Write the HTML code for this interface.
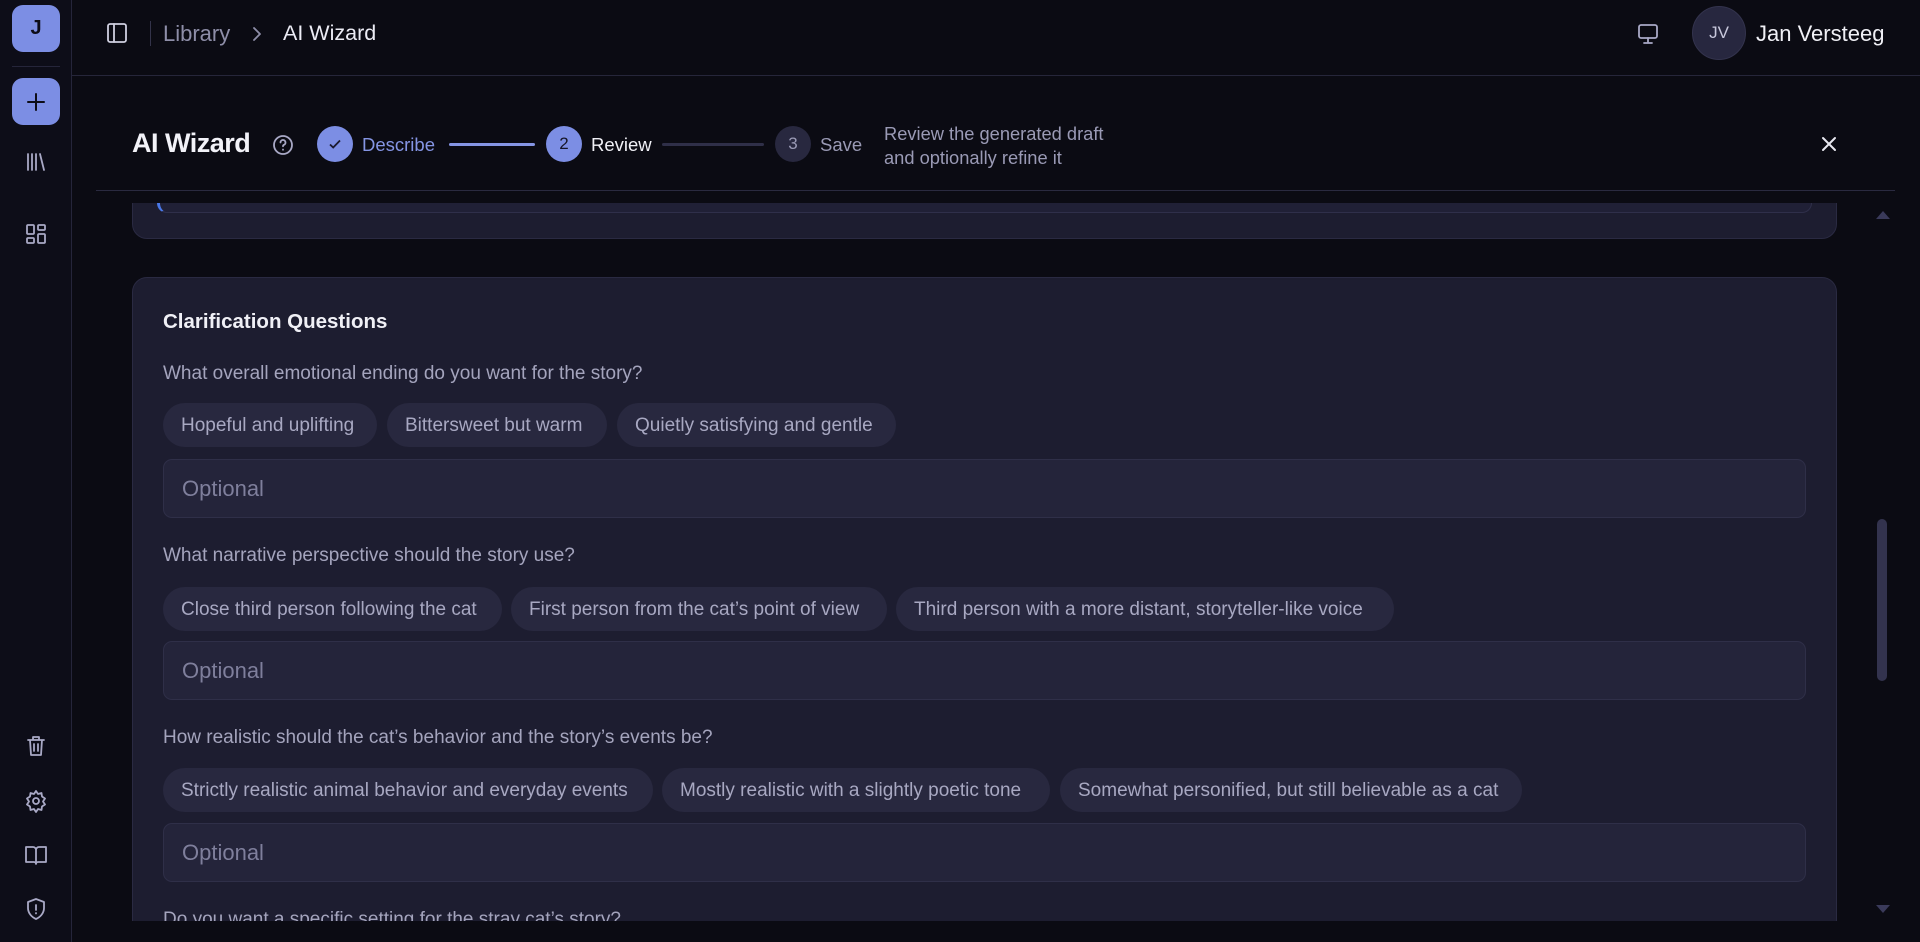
<!DOCTYPE html>
<html><head><meta charset="utf-8"><style>
*{box-sizing:border-box;margin:0;padding:0}
body{width:1920px;height:942px;background:#0b0b13;font-family:"Liberation Sans",sans-serif;color:#e6e6f0;position:relative;overflow:hidden}
.abs{position:absolute}
.side{left:0;top:0;width:72px;height:942px;background:#0d0d18;border-right:1px solid #25253a}
.btn{left:12px;width:48px;height:47px;border-radius:11px;background:#7c8ee4;color:#0d0d18;display:flex;align-items:center;justify-content:center}
.ic{stroke:#a9a9c6;fill:none;stroke-width:1.8;stroke-linecap:round;stroke-linejoin:round}
.top{left:72px;top:0;width:1848px;height:76px;border-bottom:1px solid #26263a;background:#0b0b13}
.card{left:132px;width:1705px;background:#1d1d30;border:1px solid #2a2a42;border-radius:15px}
.q{left:163px;font-size:19px;color:#a4a4bd;top:0}
.chip{height:44px;border-radius:22px;background:#28283f;color:#a8a8c2;font-size:19px;line-height:46px;padding:0 18px;white-space:nowrap}
.inp{left:163px;width:1643px;height:59px;background:#24243a;border:1px solid #2f2f48;border-radius:9px;color:#7f7f9c;font-size:22px;line-height:57px;padding-left:18px}
</style></head><body>

<div class="abs side"></div>
<div class="abs btn" style="top:5px;font-size:20px;font-weight:bold">J</div>
<div class="abs" style="left:12px;top:66px;width:48px;height:1px;background:#25253a"></div>
<div class="abs btn" style="top:78px"><svg width="22" height="22" viewBox="0 0 22 22"><path d="M11 3v16M3 11h16" stroke="#0d0d18" stroke-width="2" stroke-linecap="round"/></svg></div>
<svg class="abs ic" style="left:24px;top:150px" width="24" height="24" viewBox="0 0 24 24"><path d="M4 4v16M8 4v16M12 4v16M16 4l4 16"/></svg>
<svg class="abs ic" style="left:24px;top:222px" width="24" height="24" viewBox="0 0 24 24"><rect x="3" y="3" width="7" height="9" rx="1"/><rect x="14" y="3" width="7" height="5" rx="1"/><rect x="14" y="12" width="7" height="9" rx="1"/><rect x="3" y="16" width="7" height="5" rx="1"/></svg>
<svg class="abs ic" style="left:24px;top:734px" width="24" height="24" viewBox="0 0 24 24"><path d="M4 6h16M9 6V3h6v3M6 6l1 15h10l1-15M10 10v7M14 10v7"/></svg>
<svg class="abs ic" style="left:24px;top:789px" width="24" height="24" viewBox="0 0 24 24"><circle cx="12" cy="12" r="3"/><path d="M12 2l2 3 3.5-1 .5 3.5 3 2-2 3 2 3-3 2-.5 3.5-3.5-1-2 3-2-3-3.5 1-.5-3.5-3-2 2-3-2-3 3-2 .5-3.5 3.5 1z"/></svg>
<svg class="abs ic" style="left:24px;top:843px" width="24" height="24" viewBox="0 0 24 24"><path d="M2 4h7a3 3 0 0 1 3 3v14a2 2 0 0 0-2-2H2zM22 4h-7a3 3 0 0 0-3 3v14a2 2 0 0 1 2-2h8z"/></svg>
<svg class="abs ic" style="left:24px;top:897px" width="24" height="24" viewBox="0 0 24 24"><path d="M12 2l8 3v6c0 5-3.5 9-8 11-4.5-2-8-6-8-11V5z"/><path d="M12 8v5M12 16v.5"/></svg>

<div class="abs top"></div>
<svg class="abs ic" style="left:106px;top:22px;stroke:#d0d0e0" width="22" height="22" viewBox="0 0 22 22"><rect x="2" y="2" width="18" height="18" rx="2"/><path d="M8 2v18"/></svg>
<div class="abs" style="left:150px;top:21px;width:1px;height:25px;background:#33334a"></div>
<div class="abs" style="left:163px;top:21px;font-size:22px;color:#8e8ea8">Library</div>
<svg class="abs ic" style="left:250px;top:26px;stroke:#8e8ea8" width="14" height="16" viewBox="0 0 14 16"><path d="M4 2l6 6-6 6"/></svg>
<div class="abs" style="left:283px;top:21px;font-size:21.5px;color:#ececf5">AI Wizard</div>
<svg class="abs ic" style="left:1636px;top:22px" width="24" height="24" viewBox="0 0 24 24"><rect x="3" y="3" width="18" height="13" rx="2"/><path d="M12 16v4M8 21h8"/></svg>
<div class="abs" style="left:1692px;top:6px;width:54px;height:54px;border-radius:50%;background:#27273f;border:1px solid #33334d;color:#c8c8dc;font-size:17px;line-height:52px;text-align:center">JV</div>
<div class="abs" style="left:1756px;top:21px;font-size:22px;color:#f0f0f6">Jan Versteeg</div>

<div class="abs" style="left:132px;top:128px;font-size:27px;font-weight:bold;color:#f2f2f8;letter-spacing:-0.5px">AI Wizard</div>
<svg class="abs ic" style="left:272px;top:134px" width="22" height="22" viewBox="0 0 22 22"><circle cx="11" cy="11" r="9"/><path d="M8.5 8.5a2.5 2.5 0 1 1 3.5 2.3c-.7.3-1 .8-1 1.5M11 15.5v.3"/></svg>
<div class="abs" style="left:317px;top:126px;width:36px;height:36px;border-radius:50%;background:#7c8ee4;display:flex;align-items:center;justify-content:center"><svg width="16" height="16" viewBox="0 0 16 16"><path d="M3 8.5l3.2 3L13 4.5" stroke="#1a1a2e" stroke-width="1.8" fill="none"/></svg></div>
<div class="abs" style="left:362px;top:134px;font-size:18.5px;color:#8595e4">Describe</div>
<div class="abs" style="left:449px;top:143px;width:86px;height:3px;background:#8595e4;border-radius:2px"></div>
<div class="abs" style="left:546px;top:126px;width:36px;height:36px;border-radius:50%;background:#7c8ee4;color:#161628;font-size:17px;line-height:36px;text-align:center">2</div>
<div class="abs" style="left:591px;top:134px;font-size:18.5px;color:#f0f0f6">Review</div>
<div class="abs" style="left:662px;top:143px;width:102px;height:3px;background:#2f2f48;border-radius:2px"></div>
<div class="abs" style="left:775px;top:126px;width:36px;height:36px;border-radius:50%;background:#28283f;color:#9a9ab5;font-size:17px;line-height:36px;text-align:center">3</div>
<div class="abs" style="left:820px;top:134px;font-size:18.5px;color:#9a9ab5">Save</div>
<div class="abs" style="left:884px;top:122px;font-size:18.3px;line-height:24px;color:#9a9ab5">Review the generated draft<br>and optionally refine it</div>
<svg class="abs" style="left:1820px;top:135px" width="18" height="18" viewBox="0 0 18 18"><path d="M3 3l12 12M15 3L3 15" stroke="#e8e8f0" stroke-width="2" stroke-linecap="round"/></svg>
<div class="abs" style="left:96px;top:190px;width:1799px;height:1px;background:#2a2a40"></div>

<div class="abs" style="left:0;top:203px;width:1920px;height:718px;overflow:hidden">
 <div class="abs card" style="top:-40px;height:76px"></div>
 <div class="abs" style="left:157px;top:-30px;width:1655px;height:40px;border:1px solid #2f2f4a;border-radius:10px;border-left:3px solid #4a78e8;background:#202036"></div>
 <div class="abs card" style="top:74px;height:700px"></div>
 <div class="abs" style="left:163px;top:107px;font-size:20.5px;font-weight:bold;color:#f0f0f6">Clarification Questions</div>

 <div class="abs q" style="top:160px">What overall emotional ending do you want for the story?</div>
 <div class="abs chip" style="left:163px;top:200px;width:214px">Hopeful and uplifting</div>
 <div class="abs chip" style="left:387px;top:200px;width:220px">Bittersweet but warm</div>
 <div class="abs chip" style="left:617px;top:200px;width:279px">Quietly satisfying and gentle</div>
 <div class="abs inp" style="top:256px">Optional</div>

 <div class="abs q" style="top:342px">What narrative perspective should the story use?</div>
 <div class="abs chip" style="left:163px;top:384px;width:339px">Close third person following the cat</div>
 <div class="abs chip" style="left:511px;top:384px;width:376px">First person from the cat’s point of view</div>
 <div class="abs chip" style="left:896px;top:384px;width:498px">Third person with a more distant, storyteller-like voice</div>
 <div class="abs inp" style="top:438px">Optional</div>

 <div class="abs q" style="top:524px">How realistic should the cat’s behavior and the story’s events be?</div>
 <div class="abs chip" style="left:163px;top:565px;width:490px">Strictly realistic animal behavior and everyday events</div>
 <div class="abs chip" style="left:662px;top:565px;width:388px">Mostly realistic with a slightly poetic tone</div>
 <div class="abs chip" style="left:1060px;top:565px;width:462px">Somewhat personified, but still believable as a cat</div>
 <div class="abs inp" style="top:620px">Optional</div>

 <div class="abs q" style="top:706px">Do you want a specific setting for the stray cat’s story?</div>
 <div class="abs" style="left:1876px;top:8px;width:0;height:0;border-left:7px solid transparent;border-right:7px solid transparent;border-bottom:8px solid #3a3a5a"></div>
 <div class="abs" style="left:1877px;top:316px;width:10px;height:162px;border-radius:5px;background:#33334e"></div>
 <div class="abs" style="left:1876px;top:702px;width:0;height:0;border-left:7px solid transparent;border-right:7px solid transparent;border-top:8px solid #3a3a5a"></div>
</div>
</body></html>
